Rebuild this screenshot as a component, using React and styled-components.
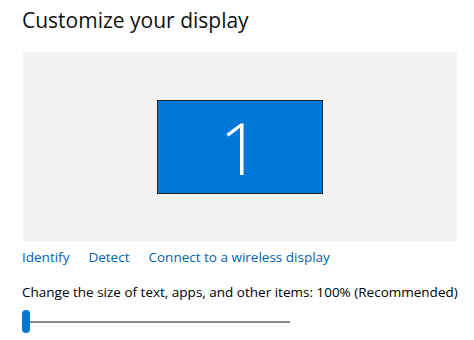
import React from "react";
import styled, { createGlobalStyle } from "styled-components";

const GlobalStyle = createGlobalStyle`
  body {
    margin: 0;
    background: #ffffff;
    font-family: "Open Sans", "Noto Sans", sans-serif;
    color: #000;
  }
`;

const Page = styled.div`
  padding: 6px 0 0 22px;
  width: 474px;
  box-sizing: border-box;
`;

const Title = styled.h1`
  margin: 0;
  font-size: 21px;
  line-height: 28px;
  font-weight: 400;
  color: #111;
`;

const Preview = styled.div`
  margin-top: 18px;
  margin-left: 1px;
  width: 434px;
  height: 190px;
  background: #f2f2f2;
  display: flex;
  align-items: center;
  justify-content: center;
`;

const Monitor = styled.div`
  width: 164px;
  height: 92px;
  background: #0078d7;
  border: 1px solid #262626;
  display: flex;
  align-items: center;
  justify-content: center;
  color: #fff;
  font-size: 72px;
  font-weight: 300;
  line-height: 1;
`;

const Links = styled.div`
  display: flex;
  gap: 19px;
  margin-top: 5px;
  font-size: 13.5px;
  line-height: 20px;
`;

const Link = styled.a`
  color: #0063b1;
  text-decoration: none;
  cursor: pointer;
`;

const Label = styled.div`
  margin-top: 15px;
  font-size: 13.5px;
  line-height: 20px;
`;

const Slider = styled.div`
  position: relative;
  margin-top: 8px;
  width: 268px;
  height: 23px;
  display: flex;
  align-items: center;
`;

const Track = styled.div`
  flex: 1;
  height: 2px;
  background: #8a8a8a;
`;

const Thumb = styled.div`
  position: absolute;
  left: 0;
  top: 0;
  width: 8px;
  height: 23px;
  border-radius: 4px;
  background: #0078d7;
`;

export default function App() {
  return (
    <>
      <GlobalStyle />
      <Page>
        <Title>Customize your display</Title>
        <Preview>
          <Monitor>1</Monitor>
        </Preview>
        <Links>
          <Link>Identify</Link>
          <Link>Detect</Link>
          <Link>Connect to a wireless display</Link>
        </Links>
        <Label>Change the size of text, apps, and other items: 100% (Recommended)</Label>
        <Slider>
          <Track />
          <Thumb />
        </Slider>
      </Page>
    </>
  );
}
